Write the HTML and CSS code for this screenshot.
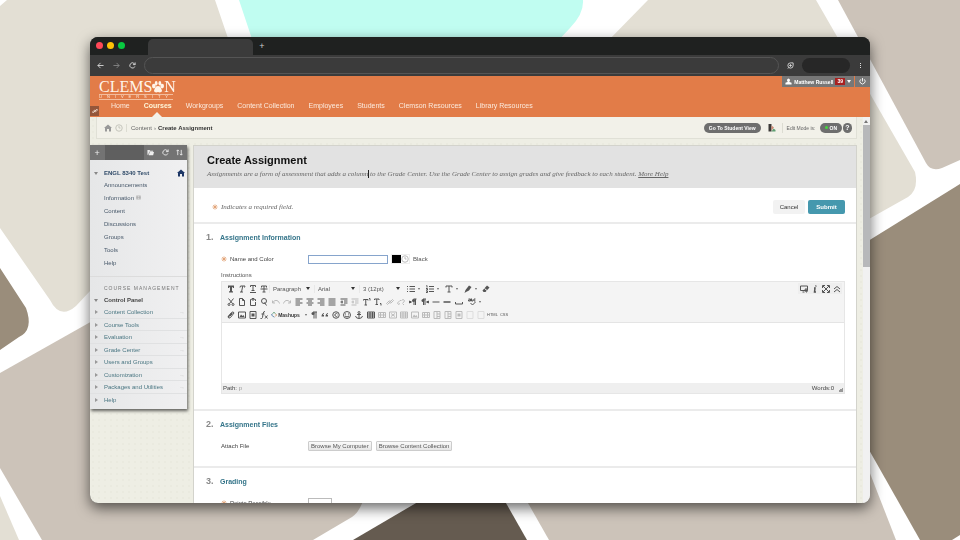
FILE: index.html
```html
<!DOCTYPE html>
<html lang="en">
<head>
    <meta charset="UTF-8">
    <meta name="viewport" content="width=device-width, initial-scale=1.0">
    <title>Create Assignment</title>
    <link rel="stylesheet" href="styles.css">
</head>
<body>
    <svg class="backdrop" viewBox="0 0 960 540" preserveAspectRatio="xMidYMid slice" aria-hidden="true">
        <path fill="#e3dfd4" d="M0 6L7 0H215L300 250L90 291L76 306Q60 320 50 300L0 228Z"/>
        <path fill="#c0fdf1" d="M239 0H583Q584 14 570 28L540 60H259Z"/>
        <path fill="#e3dfd4" d="M648 0H816L915 172Q919 190 908 197L860 224L560 90Z"/>
        <path fill="#ccc3b9" d="M838 0H960V160L942 168Q931 172 926 163Z"/>
        <path fill="#9a8d7b" d="M960 184V535L952 540H920L860 434V246Z"/>
        <path fill="#9a8d7b" d="M0 268L26 308Q34 330 19 337L0 350Z"/>
        <path fill="#ccc3b9" d="M0 373L110 311L365 495Q360 512 352 517L313 540H42L0 468Z"/>
        <path fill="#e3dfd4" d="M0 496L19 540H0Z"/>
        <path fill="#655b50" d="M353 540L440 489H498L527 540Z"/>
        <path fill="#ccc3b9" d="M549 540L520 489L850 422L896 540Z"/>
    </svg>

    <svg class="sprite" aria-hidden="true">
        <symbol id="back" viewBox="0 0 16 16"><path d="M15 8H2M8 2L2 8l6 6"/></symbol>
        <symbol id="forward" viewBox="0 0 16 16"><path d="M1 8h13M8 2l6 6-6 6"/></symbol>
        <symbol id="reload" viewBox="0 0 16 16"><path d="M13.5 10A6 6 0 1 1 12 3.5L14 6M14 1v5H9"/></symbol>
        <symbol id="leaf" viewBox="0 0 16 16"><path d="M14 2H8a6 6 0 1 0 6 6ZM8 5v6M5 8h6M2 15l3-3"/></symbol>
        <symbol id="home" viewBox="0 0 16 16"><path class="solid" d="M8 1L0 8h2v7h4v-5h4v5h4V8h2Z"/></symbol>
        <symbol id="clock" viewBox="0 0 16 16"><circle cx="8" cy="8" r="6.5"/><path d="M8 4v4h3"/></symbol>
        <symbol id="user" viewBox="0 0 16 16"><path class="solid" d="M8 1a4 4 0 0 1 2 7v1l5 2v4H1v-4l5-2V8a4 4 0 0 1 2-7Z"/></symbol>
        <symbol id="power" viewBox="0 0 16 16"><path d="M8 0v8M4 3a6 6 0 1 0 8 0"/></symbol>
        <symbol id="link" viewBox="0 0 16 16"><path d="M7 9l6-6 2 2-5 5-3 0M9 7l-6 6-2-2 5-5 3 0"/></symbol>
        <symbol id="folder" viewBox="0 0 16 16"><path class="solid" d="M1 2h5l1 2h7v2H5L3 13H1ZM6 7h10l-2 7H4Z"/></symbol>
        <symbol id="sort" viewBox="0 0 16 16"><path d="M4 14V2M1 5l3-3 3 3M12 2v12M9 11l3 3 3-3"/></symbol>
        <symbol id="asterisk" viewBox="0 0 16 16"><path d="M8 1v14M1 8h14M3 3l10 10M13 3L3 13"/></symbol>
        <symbol id="bold" viewBox="0 0 16 16"><path class="solid" d="M2 1h12v5h-2l-1-2h-1v8l2 1v2H4v-2l2-1V4H5L4 6H2Z"/></symbol>
        <symbol id="italic" viewBox="0 0 16 16"><path d="M4 5l1-3h9l-1 3M9.500 2L7 14M4 14h6"/></symbol>
        <symbol id="underline" viewBox="0 0 16 16"><path d="M3 4V1h10v3M8 1v10M5 11h6M2 15h12"/></symbol>
        <symbol id="strike" viewBox="0 0 16 16"><path d="M3 5V2h10v3M8 2v12M5 14h6M1 8h14"/></symbol>
        <symbol id="list" viewBox="0 0 16 16"><path d="M5 3h11M5 8h11M5 13h11M0 3h2M0 8h2M0 13h2"/></symbol>
        <symbol id="numlist" viewBox="0 0 16 16"><path d="M6 3h10M6 8h10M6 13h10M1 1h1v4M0 7h3v3H0M0 12h3v3H0"/></symbol>
        <symbol id="color" viewBox="0 0 16 16"><path d="M2 5V2h12v3M8 2v12M5 14h6"/></symbol>
        <symbol id="pen" viewBox="0 0 16 16"><path class="solid" d="M10 1l5 3-5 7-6 3-3 2 2-6Z"/></symbol>
        <symbol id="eraser" viewBox="0 0 16 16"><path class="solid" d="M10 1l5 4-8 9H3l-2-3Z"/><path stroke="#f4f4f4" d="M5 7l5 4"/></symbol>
        <symbol id="cut" viewBox="0 0 16 16"><path d="M3 1l8 10M13 1L5 11"/><circle cx="4" cy="13" r="2"/><circle cx="12" cy="13" r="2"/></symbol>
        <symbol id="file" viewBox="0 0 16 16"><path d="M3 1h6l4 4v10H3ZM9 1v4h4"/></symbol>
        <symbol id="paste" viewBox="0 0 16 16"><path d="M5 3H3v12h10V8M11 3h2v3M6 1h4v3H6Z"/></symbol>
        <symbol id="find" viewBox="0 0 16 16"><circle cx="8" cy="6" r="5"/><path d="M9 9l4 6"/></symbol>
        <symbol id="undo" viewBox="0 0 16 16"><path d="M1 5v5h5M1 10c3-6 11-8 14 1"/></symbol>
        <symbol id="redo" viewBox="0 0 16 16"><path d="M15 5v5h-5M15 10C12 4 4 2 1 11"/></symbol>
        <symbol id="left" viewBox="0 0 16 16"><path d="M1 2h14M1 6h9M1 10h14M1 14h9"/></symbol>
        <symbol id="center" viewBox="0 0 16 16"><path d="M1 2h14M4 6h8M1 10h14M4 14h8"/></symbol>
        <symbol id="right" viewBox="0 0 16 16"><path d="M1 2h14M6 6h9M1 10h14M6 14h9"/></symbol>
        <symbol id="justify" viewBox="0 0 16 16"><path d="M1 2h14M1 6h14M1 10h14M1 14h14"/></symbol>
        <symbol id="indent" viewBox="0 0 16 16"><path d="M1 2h14M8 6h7M8 10h7M1 14h10M1 8h5M4 5v6"/></symbol>
        <symbol id="super" viewBox="0 0 16 16"><path d="M1 5V3h9v2M5.500 3v11M3 14h5M12 1h2v4"/></symbol>
        <symbol id="sub" viewBox="0 0 16 16"><path d="M1 4V2h9v2M5.500 2v11M3 13h5M12 11h2v4"/></symbol>
        <symbol id="unlink" viewBox="0 0 16 16"><path d="M6 11l-3 2-2-3 5-5h3M10 4l3-1 2 3-4 5M12 12l2 2"/></symbol>
        <symbol id="ltr" viewBox="0 0 16 16"><path d="M15 2H9M13 2v12M10 2v12M1 6l4 2-4 2Z"/><circle class="solid" cx="9" cy="5" r="3"/></symbol>
        <symbol id="rtl" viewBox="0 0 16 16"><path d="M10 2H4M8 2v12M5 2v12M15 6l-4 2 4 2Z"/><circle class="solid" cx="4" cy="5" r="3"/></symbol>
        <symbol id="line" viewBox="0 0 16 16"><path d="M1 8h14"/></symbol>
        <symbol id="thickline" viewBox="0 0 16 16"><path stroke-width="3" d="M1 8h14"/></symbol>
        <symbol id="space" viewBox="0 0 16 16"><path d="M1 8v4h14V8"/></symbol>
        <symbol id="spell" viewBox="0 0 16 16"><path d="M1 2h4v4H1V4h4M7 1v5h3V3M15 2h-3v4h3M5 10l4 4 6-6"/></symbol>
        <symbol id="clip" viewBox="0 0 16 16"><path d="M2 11l7-8q4-3 5 1l-7 9q-4 3-5-1l8-8M5 11l6-6"/></symbol>
        <symbol id="image" viewBox="0 0 16 16"><path d="M1 2h14v12H1Z"/><path class="solid" d="M3 12l3-5 3 3 2-2 2 4Z"/></symbol>
        <symbol id="video" viewBox="0 0 16 16"><path d="M2 1h12v14H2Z"/><path class="solid" d="M5 5h6v6H5Z"/></symbol>
        <symbol id="formula" viewBox="0 0 16 16"><path d="M10 1Q7 0 6 6L5 13q-1 3-4 2M3 6h6M10 9l5 6M15 9l-5 6"/></symbol>
        <symbol id="mashup" viewBox="0 0 16 16"><path stroke="#3d8a57" d="M4 4L8 1l4 3"/><path stroke="#c77a3a" d="M12 5l3 3-4 4"/><path stroke="#3f6d9c" d="M9 14L1 8l3-3"/></symbol>
        <symbol id="pilcrow" viewBox="0 0 16 16"><path d="M14 2H6M12 2v13M8 2v13"/><circle class="solid" cx="6" cy="5" r="3"/></symbol>
        <symbol id="quote" viewBox="0 0 16 16"><path class="solid" d="M6 4Q1 5 1 11h5V8H4Q4 6 6 6ZM14 4Q9 5 9 11h5V8h-2q0-2 2-2Z"/></symbol>
        <symbol id="copyright" viewBox="0 0 16 16"><circle cx="8" cy="8" r="6.500"/><path d="M11 6a3 3 0 1 0 0 4"/></symbol>
        <symbol id="smile" viewBox="0 0 16 16"><circle cx="8" cy="8" r="7"/><path d="M5 5v2M11 5v2M4 10q4 4 8 0"/></symbol>
        <symbol id="anchor" viewBox="0 0 16 16"><circle cx="8" cy="3" r="2"/><path d="M8 5v10M4 7h8M1 10q1 5 7 5t7-5"/></symbol>
        <symbol id="table" viewBox="0 0 16 16"><path d="M1 2h14v12H1ZM1 6h14M1 10h14M6 2v12M11 2v12"/></symbol>
        <symbol id="row" viewBox="0 0 16 16"><path d="M1 3h14v10H1ZM1 8h14M5 3v10M11 3v10"/></symbol>
        <symbol id="delrow" viewBox="0 0 16 16"><path d="M1 2h14v12H1ZM4 5l8 6M12 5l-8 6"/></symbol>
        <symbol id="col" viewBox="0 0 16 16"><path d="M2 1h12v14H2ZM8 1v14M8 6h6M8 11h6"/></symbol>
        <symbol id="cell" viewBox="0 0 16 16"><path d="M2 1h12v14H2Z"/></symbol>
        <symbol id="preview" viewBox="0 0 16 16"><path d="M1 2h14v9H1ZM5 14h4M10 8h4v6h-2Z"/></symbol>
        <symbol id="info" viewBox="0 0 16 16"><path stroke-width="3" d="M10 1l-.5 2M6 6h2l-1 8h3"/></symbol>
        <symbol id="expand" viewBox="0 0 16 16"><path d="M1 6V1h5M10 1h5v5M15 10v5h-5M6 15H1v-5M2 2l12 12M14 2L2 14"/></symbol>
        <symbol id="collapse" viewBox="0 0 16 16"><path d="M2 8l6-5 6 5M2 14l6-5 6 5"/></symbol>
        <symbol id="palette" viewBox="0 0 16 16"><path fill="#3c3a38" stroke="none" d="M1 0h6v15H1Z"/><path fill="#d08a75" stroke="none" d="M7 3l5 4-5 6Z"/><path fill="#5f9e72" stroke="none" d="M7 15l4-6 4 3v3Z"/></symbol>
        <symbol id="paw" viewBox="0 0 26 26"><path class="solid" d="M13 11q5 0 7 5 3 5 0 8-3 2-7 0-4 2-7 0-3-3 0-8 2-5 7-5Z"/><ellipse class="solid" cx="4" cy="11" rx="4" ry="5"/><ellipse class="solid" cx="9" cy="5" rx="3" ry="5"/><ellipse class="solid" cx="17" cy="5" rx="3" ry="5"/><ellipse class="solid" cx="22" cy="11" rx="4" ry="5"/></symbol>
    </svg>

    <div class="window">
        <div class="tabs">
            <div class="lights"><i class="red"></i><i class="yellow"></i><i class="green"></i></div>
            <div class="tab"></div>
            <button class="new-tab" aria-label="New tab">+</button>
        </div>
        <div class="address">
            <button aria-label="Back"><svg><use href="#back"/></svg></button>
            <button class="dim" aria-label="Forward"><svg><use href="#forward"/></svg></button>
            <button aria-label="Reload"><svg><use href="#reload"/></svg></button>
            <input class="url" type="text" aria-label="Address">
            <button aria-label="Energy saver"><svg><use href="#leaf"/></svg></button>
            <button class="profile" aria-label="Profile"></button>
            <button class="more" aria-label="Menu"><i></i><i></i><i></i></button>
        </div>

        <header class="banner">
            <div class="logo">
                <div class="logo-name">CLEMS<svg><use href="#paw"/></svg>N</div>
                <div class="logo-sub">UNIVERSITY</div>
            </div>
            <nav class="main-nav">
                <a href="#">Home</a>
                <a href="#" class="active">Courses</a>
                <a href="#">Workgroups</a>
                <a href="#">Content Collection</a>
                <a href="#">Employees</a>
                <a href="#">Students</a>
                <a href="#">Clemson Resources</a>
                <a href="#">Library Resources</a>
            </nav>
            <button class="quick" aria-label="Quick links"><svg><use href="#link"/></svg></button>
            <div class="account">
                <button class="user"><svg><use href="#user"/></svg>Matthew Russell<b>39</b><i class="down"></i></button>
                <button class="logout" aria-label="Logout"><svg><use href="#power"/></svg></button>
            </div>
        </header>

        <div class="viewport">
            <div class="page">
                <div class="crumbs">
                    <div class="crumb-icons">
                        <svg><use href="#home"/></svg>
                        <svg class="faint"><use href="#clock"/></svg>
                    </div>
                    <a href="#">Content</a>
                    <span class="sep">›</span>
                    <strong>Create Assignment</strong>
                    <button class="pill">Go To Student View</button>
                    <svg class="theme"><use href="#palette"/></svg>
                    <div class="edit-mode">
                        <span>Edit Mode is:</span>
                        <button class="pill"><i class="led"></i>ON</button>
                        <button class="pill help">?</button>
                    </div>
                </div>

                <div class="columns">
                    <aside class="sidebar">
                        <div class="side-tools">
                            <button aria-label="Add">+</button>
                            <div class="side-gap"></div>
                            <button aria-label="Folder view"><svg><use href="#folder"/></svg></button>
                            <button aria-label="Refresh"><svg><use href="#reload"/></svg></button>
                            <button aria-label="Reorder"><svg><use href="#sort"/></svg></button>
                        </div>
                        <div class="side-title course"><i class="down"></i>ENGL 8340 Test<svg><use href="#home"/></svg></div>
                        <ul class="course-links">
                            <li><a href="#">Announcements</a></li>
                            <li><a href="#">Information</a> <svg><use href="#row"/></svg></li>
                            <li><a href="#">Content</a></li>
                            <li><a href="#">Discussions</a></li>
                            <li><a href="#">Groups</a></li>
                            <li><a href="#">Tools</a></li>
                            <li><a href="#">Help</a></li>
                        </ul>
                        <div class="side-label">COURSE MANAGEMENT</div>
                        <div class="side-title"><i class="down"></i>Control Panel</div>
                        <ul class="panel-links">
                            <li><a href="#">Content Collection</a><span>→</span></li>
                            <li><a href="#">Course Tools</a></li>
                            <li><a href="#">Evaluation</a><span>→</span></li>
                            <li><a href="#">Grade Center</a><span>→</span></li>
                            <li><a href="#">Users and Groups</a></li>
                            <li><a href="#">Customization</a><span>→</span></li>
                            <li><a href="#">Packages and Utilities</a><span>→</span></li>
                            <li><a href="#">Help</a></li>
                        </ul>
                    </aside>

                    <main class="content">
                        <div class="title">
                            <h1>Create Assignment</h1>
                            <p>Assignments are a form of assessment that adds a column<span class="caret"></span> to the Grade Center. Use the Grade Center to assign grades and give feedback to each student. <a href="#">More Help</a></p>
                        </div>

                        <form>
                            <div class="actions">
                                <svg class="star"><use href="#asterisk"/></svg>
                                <em>Indicates a required field.</em>
                                <button type="button" class="cancel">Cancel</button>
                                <button type="button" class="submit">Submit</button>
                            </div>

                            <section>
                                <h2><span>1.</span>Assignment Information</h2>
                                <div class="field">
                                    <label for="name"><svg class="star"><use href="#asterisk"/></svg>Name and Color</label>
                                    <input id="name" class="name" type="text">
                                    <button type="button" class="swatch" aria-label="Pick color"><i></i><svg><use href="#clock"/></svg></button>
                                    <span>Black</span>
                                </div>
                                <label class="block" for="instructions">Instructions</label>
                                <div class="editor">
                                    <div class="toolbar">
                                        <div class="row">
                                            <button type="button" aria-label="Bold"><svg><use href="#bold"/></svg></button>
                                            <button type="button" aria-label="Italic"><svg><use href="#italic"/></svg></button>
                                            <button type="button" aria-label="Underline"><svg><use href="#underline"/></svg></button>
                                            <button type="button" aria-label="Strikethrough"><svg><use href="#strike"/></svg></button>
                                            <span class="pick"><select aria-label="Format"><option>Paragraph</option></select></span>
                                            <span class="pick"><select aria-label="Font"><option>Arial</option></select></span>
                                            <span class="pick"><select aria-label="Size"><option>3 (12pt)</option></select></span>
                                            <button type="button" class="menu" aria-label="Bullets"><svg><use href="#list"/></svg></button>
                                            <button type="button" class="menu" aria-label="Numbering"><svg><use href="#numlist"/></svg></button>
                                            <button type="button" class="menu" aria-label="Text color"><svg><use href="#color"/></svg></button>
                                            <button type="button" class="menu" aria-label="Highlight"><svg><use href="#pen"/></svg></button>
                                            <button type="button" aria-label="Remove formatting"><svg><use href="#eraser"/></svg></button>
                                            <div class="view">
                                                <button type="button" aria-label="Preview"><svg><use href="#preview"/></svg></button>
                                                <button type="button" aria-label="Help"><svg><use href="#info"/></svg></button>
                                                <button type="button" aria-label="Full screen"><svg><use href="#expand"/></svg></button>
                                                <button type="button" aria-label="Show less"><svg><use href="#collapse"/></svg></button>
                                            </div>
                                        </div>
                                        <div class="row">
                                            <button type="button" aria-label="Cut"><svg><use href="#cut"/></svg></button>
                                            <button type="button" aria-label="Copy"><svg><use href="#file"/></svg></button>
                                            <button type="button" aria-label="Paste"><svg><use href="#paste"/></svg></button>
                                            <button type="button" aria-label="Find"><svg><use href="#find"/></svg></button>
                                            <button type="button" class="off start" aria-label="Undo"><svg><use href="#undo"/></svg></button>
                                            <button type="button" class="off" aria-label="Redo"><svg><use href="#redo"/></svg></button>
                                            <button type="button" class="start" aria-label="Align left"><svg><use href="#left"/></svg></button>
                                            <button type="button" aria-label="Center"><svg><use href="#center"/></svg></button>
                                            <button type="button" aria-label="Align right"><svg><use href="#right"/></svg></button>
                                            <button type="button" aria-label="Justify"><svg><use href="#justify"/></svg></button>
                                            <button type="button" class="start" aria-label="Indent"><svg><use href="#indent"/></svg></button>
                                            <button type="button" class="off" aria-label="Outdent"><svg><use href="#indent"/></svg></button>
                                            <button type="button" class="start" aria-label="Superscript"><svg><use href="#super"/></svg></button>
                                            <button type="button" aria-label="Subscript"><svg><use href="#sub"/></svg></button>
                                            <button type="button" class="off start" aria-label="Link"><svg><use href="#link"/></svg></button>
                                            <button type="button" class="off" aria-label="Unlink"><svg><use href="#unlink"/></svg></button>
                                            <button type="button" class="start" aria-label="Left to right"><svg><use href="#ltr"/></svg></button>
                                            <button type="button" class="start" aria-label="Right to left"><svg><use href="#rtl"/></svg></button>
                                            <button type="button" aria-label="Line"><svg><use href="#line"/></svg></button>
                                            <button type="button" aria-label="Rule"><svg><use href="#thickline"/></svg></button>
                                            <button type="button" class="start" aria-label="Space"><svg><use href="#space"/></svg></button>
                                            <button type="button" class="menu start" aria-label="Spelling"><svg><use href="#spell"/></svg></button>
                                        </div>
                                        <div class="row">
                                            <button type="button" aria-label="Attach"><svg><use href="#clip"/></svg></button>
                                            <button type="button" aria-label="Image"><svg><use href="#image"/></svg></button>
                                            <button type="button" aria-label="Media"><svg><use href="#video"/></svg></button>
                                            <button type="button" aria-label="Formula"><svg><use href="#formula"/></svg></button>
                                            <button type="button" class="menu mashups start"><svg><use href="#mashup"/></svg>Mashups</button>
                                            <button type="button" aria-label="Paragraph marks"><svg><use href="#pilcrow"/></svg></button>
                                            <button type="button" aria-label="Quote"><svg><use href="#quote"/></svg></button>
                                            <button type="button" aria-label="Symbol"><svg><use href="#copyright"/></svg></button>
                                            <button type="button" aria-label="Emoticon"><svg><use href="#smile"/></svg></button>
                                            <button type="button" class="start" aria-label="Anchor"><svg><use href="#anchor"/></svg></button>
                                            <button type="button" class="start" aria-label="Table"><svg><use href="#table"/></svg></button>
                                            <button type="button" class="off" aria-label="Row"><svg><use href="#row"/></svg></button>
                                            <button type="button" class="off" aria-label="Delete row"><svg><use href="#delrow"/></svg></button>
                                            <button type="button" class="off" aria-label="Row before"><svg><use href="#table"/></svg></button>
                                            <button type="button" class="off" aria-label="Row after"><svg><use href="#image"/></svg></button>
                                            <button type="button" class="off" aria-label="Merge"><svg><use href="#row"/></svg></button>
                                            <button type="button" class="off" aria-label="Column before"><svg><use href="#col"/></svg></button>
                                            <button type="button" class="off" aria-label="Column after"><svg><use href="#col"/></svg></button>
                                            <button type="button" class="off" aria-label="Delete column"><svg><use href="#video"/></svg></button>
                                            <button type="button" class="off pale" aria-label="Cell"><svg><use href="#cell"/></svg></button>
                                            <button type="button" class="off pale" aria-label="Split cell"><svg><use href="#cell"/></svg></button>
                                            <button type="button" class="code">HTML</button>
                                            <button type="button" class="code">CSS</button>
                                        </div>
                                    </div>
                                    <textarea id="instructions"></textarea>
                                    <div class="status"><span>Path: <i>p</i></span><span>Words:0</span></div>
                                </div>
                            </section>

                            <section>
                                <h2><span>2.</span>Assignment Files</h2>
                                <div class="field">
                                    <label for="browse">Attach File</label>
                                    <button type="button" id="browse" class="browse">Browse My Computer</button>
                                    <button type="button" class="browse">Browse Content Collection</button>
                                </div>
                            </section>

                            <section>
                                <h2><span>3.</span>Grading</h2>
                                <div class="field">
                                    <label for="points"><svg class="star"><use href="#asterisk"/></svg>Points Possible</label>
                                    <input id="points" class="points" type="text">
                                </div>
                            </section>
                        </form>
                    </main>
                </div>
            </div>
            <div class="scrollbar"><i class="up"></i><div class="thumb"></div></div>
        </div>
    </div>
</body>
</html>
```
FILE: styles.css
```css
* {
    box-sizing: border-box;
}
body {
    margin: 0;
    padding: 37px 90px;
    height: 100vh;
    background: #fff;
    font-family: "Liberation Sans", Arial, sans-serif;
    font-size: 6px;
    line-height: 8px;
    color: #555;
    overflow: hidden;
}
a {
    color: inherit;
    text-decoration: none;
}
button, input, select, textarea {
    font: inherit;
    color: inherit;
    margin: 0;
    padding: 0;
    border: none;
    background: none;
}
button {
    display: flex;
    align-items: center;
    justify-content: center;
    cursor: pointer;
}
ul {
    list-style: none;
    margin: 0;
    padding: 0;
}
svg {
    flex: none;
    width: 8px;
    height: 8px;
    fill: none;
    stroke: currentColor;
    stroke-width: 2;
}
.solid {
    fill: currentColor;
    stroke: none;
}
.sprite {
    display: none;
}
.backdrop {
    position: fixed;
    inset: 0;
    width: 100%;
    height: 100%;
    stroke: none;
}
.down {
    border: 2px solid transparent;
    border-top: 3px solid currentColor;
    border-bottom: none;
}

/* browser window */
.window {
    position: relative;
    display: flex;
    flex-direction: column;
    height: 100%;
    border-radius: 8px;
    overflow: hidden;
    background: #3b3b3b;
    box-shadow: 0 5px 14px rgba(0, 0, 0, 0.6);
}
.tabs {
    display: flex;
    align-items: flex-end;
    height: 18px;
    background: #1f2120;
    color: #ccc;
}
.lights {
    display: flex;
    gap: 4px;
    width: 58px;
    padding: 0 6px 6px;
}
.lights i {
    width: 7px;
    height: 7px;
    border-radius: 50%;
}
.red { background: #ff4757; }
.yellow { background: #ffc107; }
.green { background: #08c940; }
.tab {
    width: 105px;
    height: 16px;
    border-radius: 5px 5px 0 0;
    background: #3b3b3b;
}
.new-tab {
    width: 18px;
    height: 18px;
    font-size: 9px;
}
.address {
    display: flex;
    align-items: center;
    gap: 8px;
    height: 21px;
    padding: 0 8px 0 7px;
    color: #ddd;
}
.address svg {
    width: 7px;
    height: 7px;
}
.address .dim {
    color: #888;
    padding: 0 1px;
}
.url {
    flex: 1;
    min-width: 0;
    height: 17px;
    border: 1px solid #555;
    border-radius: 9px;
    padding: 0 8px;
}
.profile {
    width: 48px;
    height: 15px;
    border-radius: 8px;
    background: #272727;
}
.more {
    flex-direction: column;
    gap: 1px;
    width: 4px;
}
.more i {
    width: 1px;
    height: 1px;
    background: #ddd;
}

/* orange banner */
.banner {
    position: relative;
    flex: none;
    height: 41px;
    background: #e27c48;
    color: #fbeadd;
}
.logo {
    width: 74px;
    margin-left: 9px;
    padding-top: 3px;
}
.logo-name {
    display: flex;
    align-items: center;
    border-bottom: 1px solid #f3bd9d;
    font: 16px/15px "Liberation Serif", serif;
    color: #fff5ea;
}
.logo-name svg {
    width: 12px;
    height: 12px;
}
.logo-sub {
    border-bottom: 1px solid #f3bd9d;
    font-size: 4px;
    line-height: 4px;
    letter-spacing: 5px;
    white-space: nowrap;
    overflow: hidden;
}
.main-nav {
    display: flex;
    gap: 14px;
    padding: 1px 0 0 21px;
    font-size: 7px;
    line-height: 10px;
    white-space: nowrap;
}
.main-nav a {
    position: relative;
}
.active {
    font-weight: bold;
    color: #fff6d8;
}
.active::after {
    content: "";
    position: absolute;
    left: 7px;
    top: 11px;
    border: 6px solid transparent;
    border-top: none;
    border-bottom: 6px solid #f3f2ea;
}
.quick {
    position: absolute;
    left: 0;
    bottom: 1px;
    width: 9px;
    height: 10px;
    background: #94563a;
}
.quick svg {
    width: 6px;
    height: 6px;
}
.account {
    position: absolute;
    top: 0;
    right: 0;
    display: flex;
    gap: 1px;
    font-size: 5px;
    font-weight: bold;
    color: #fff;
}
.account button {
    height: 11px;
    background: #777;
}
.account svg {
    width: 7px;
    height: 7px;
}
.user {
    gap: 2px;
    padding: 0 3px;
}
.user b {
    padding: 0 2px;
    background: #a8201f;
    line-height: 7px;
}
.logout {
    width: 15px;
}

/* page */
.viewport {
    flex: 1;
    min-height: 0;
    display: flex;
    overflow: hidden;
    background: #eeeee4;
}
.page {
    flex: 1;
    min-width: 0;
    padding-right: 6px;
    background-image: radial-gradient(#eaeadf 1px, transparent 1px);
    background-size: 6px 6px;
}
.crumbs {
    display: flex;
    align-items: center;
    height: 22px;
    margin-left: 6px;
    padding-right: 4px;
    border: 1px solid #e0e0d6;
    border-top: none;
    background: #f2f1e9;
    color: #666;
}
.crumb-icons {
    display: flex;
    gap: 3px;
    padding: 0 3px 0 7px;
    margin-right: 4px;
    border-right: 1px solid #dcdcd2;
    color: #999;
}
.faint {
    color: #c5c5bc;
}
.sep {
    padding: 0 2px;
}
.crumbs strong {
    flex: 1;
    color: #333;
}
.pill {
    height: 10px;
    padding: 0 5px;
    border-radius: 5px;
    background: #6e6e6e;
    font-size: 5px;
    font-weight: bold;
    color: #fff;
}
.theme {
    margin: 0 6px 0 7px;
}
.edit-mode {
    display: flex;
    align-items: center;
    gap: 1px;
    padding-left: 4px;
    border-left: 1px solid #dcdcd2;
    font-size: 5px;
}
.edit-mode span {
    margin-right: 3px;
}
.led {
    width: 3px;
    height: 3px;
    margin-right: 2px;
    border-radius: 50%;
    background: #45d63c;
}
.help {
    width: 9px;
    padding: 0;
    font-size: 7px;
}
.columns {
    display: flex;
    align-items: flex-start;
    gap: 6px;
    padding-top: 6px;
}
.scrollbar {
    width: 7px;
    padding-top: 3px;
    background: #f1f1f1;
}
.up {
    display: block;
    width: 4px;
    margin: 0 1px 2px;
    border: 2px solid transparent;
    border-top: none;
    border-bottom: 3px solid #777;
}
.thumb {
    height: 37%;
    background: #b7b8ba;
}

/* left menu */
.sidebar {
    flex: none;
    width: 97px;
    padding-bottom: 3px;
    background: linear-gradient(to right, #e6e7e8, #f0f0f1);
    box-shadow: 1px 2px 3px rgba(0, 0, 0, 0.6);
    color: #47586a;
}
.side-tools {
    display: flex;
    height: 15px;
    background: #737373;
    color: #eee;
}
.side-tools button {
    flex: 1;
    font-size: 9px;
}
.side-tools svg {
    width: 7px;
    height: 7px;
}
.side-gap {
    width: 39px;
    background: #5f5f5f;
}
.side-title {
    display: flex;
    align-items: center;
    height: 12px;
    padding: 0 2px 0 4px;
    font-weight: bold;
    color: #444;
}
.side-title .down {
    margin-right: 6px;
    color: #888;
}
.course {
    margin-top: 7px;
    color: #2f4a68;
}
.course svg {
    margin-left: auto;
    color: #1d3766;
}
.course-links {
    padding-bottom: 6px;
    border-bottom: 1px solid #dcdcdc;
}
.course-links li {
    padding-left: 14px;
    line-height: 13px;
}
.course-links svg {
    width: 5px;
    height: 5px;
    color: #aaa;
}
.side-label {
    padding: 7px 0 2px 14px;
    font-size: 5px;
    letter-spacing: 1px;
    white-space: nowrap;
    color: #777;
}
.panel-links li {
    display: flex;
    align-items: center;
    height: 12px;
    padding-right: 2px;
    border-bottom: 1px solid #e0e1e2;
    color: #4b7783;
}
.panel-links li:nth-child(odd) {
    height: 13px;
}
.panel-links li:last-child {
    border: none;
}
.panel-links li::before {
    content: "";
    margin: 0 6px 0 5px;
    border: 2px solid transparent;
    border-left: 3px solid #999;
    border-right: none;
}
.panel-links span {
    margin-left: auto;
    color: #ccc;
}

/* assignment form */
.content {
    flex: 1;
    min-width: 0;
    border: 1px solid #d3d3cc;
    background: #fff;
}
.title {
    height: 42px;
    padding: 8px 13px;
    background: #e2e2e2;
}
h1 {
    margin: 0 0 4px;
    font-size: 11px;
    line-height: 12px;
    color: #111;
}
.title p, .actions em {
    margin: 0;
    font: italic 7px/8px "Liberation Serif", serif;
    color: #666;
}
.title a {
    text-decoration: underline;
}
.caret {
    position: relative;
}
.caret::after {
    content: "";
    position: absolute;
    top: 0;
    width: 1px;
    height: 8px;
    background: #222;
}
.actions {
    display: flex;
    align-items: center;
    gap: 3px;
    height: 36px;
    padding: 3px 11px 0 18px;
    border-bottom: 2px solid #ebebeb;
}
.star {
    width: 6px;
    height: 6px;
    color: #df9a68;
}
.actions em {
    flex: 1;
}
.cancel, .submit {
    height: 14px;
    border-radius: 2px;
    background: #f2f2f2;
    color: #333;
    width: 32px;
}
.submit {
    width: 37px;
    background: #4598ae;
    color: #fff;
    font-weight: bold;
}
section {
    padding: 7px 11px 15px 12px;
    border-bottom: 2px solid #ebebeb;
}
h2 {
    display: flex;
    align-items: baseline;
    margin: 0;
    font-size: 7px;
    line-height: 12px;
    color: #35758a;
}
h2 span {
    width: 14px;
    font-size: 9px;
    color: #888;
}
.field {
    display: flex;
    align-items: center;
    gap: 3px;
    margin-top: 10px;
    padding-left: 15px;
}
.field label {
    display: flex;
    align-items: center;
    gap: 3px;
    width: 84px;
    color: #444;
}
.name {
    width: 80px;
    height: 9px;
    border: 1px solid #86a4cc;
}
.swatch {
    padding: 0;
    border: 1px solid #eee;
    color: #bbb;
}
.swatch i {
    width: 9px;
    height: 8px;
    background: #000;
}
.block {
    display: block;
    margin: 7px 0 2px 15px;
}
.editor {
    margin-left: 15px;
    border: 1px solid #e6e6e6;
}
.toolbar {
    padding: 0 2px 1px;
    border-bottom: 1px solid #e4e4e4;
    background: #f4f4f4;
    color: #555;
}
.row {
    display: flex;
    align-items: center;
    height: 13px;
    padding-left: 1px;
}
.row button {
    width: 11px;
    height: 11px;
    flex: none;
}
.row .start {
    margin-left: 1px;
}
.row .off {
    color: #bbb;
}
.row .pale {
    color: #ddd;
}
.row .menu {
    width: 19px;
    gap: 3px;
}
.menu::after {
    content: "";
    border: 1px solid transparent;
    border-top: 2px solid #666;
    border-bottom: none;
}
.row .mashups {
    width: 38px;
    gap: 1px;
    font-size: 5px;
    font-weight: bold;
    color: #333;
}
.mashups svg {
    width: 6px;
    height: 6px;
}
.mashups::after {
    margin-left: 4px;
}
.row .code {
    width: auto;
    padding: 0 1px;
    font-size: 4px;
}
.pick {
    display: flex;
    align-items: center;
    width: 45px;
    padding: 0 4px 0 3px;
    border-left: 1px solid #e8e8e8;
}
.pick select {
    appearance: none;
    flex: 1;
    min-width: 0;
}
.pick::after {
    content: "";
    border: 2px solid transparent;
    border-top: 3px solid #333;
    border-bottom: none;
}
.view {
    display: flex;
    margin-left: auto;
    background: #eee;
}
textarea {
    display: block;
    width: 100%;
    height: 60px;
    resize: none;
    background: #fff;
}
.status {
    display: flex;
    justify-content: space-between;
    padding: 1px 10px 1px 1px;
    background: linear-gradient(135deg, transparent 50%, #999 50%) right 1px bottom 1px / 5px 5px no-repeat, #efefef;
    color: #444;
}
.status i {
    font-style: normal;
    color: #999;
}
.browse {
    height: 10px;
    margin-right: 1px;
    padding: 0 2px;
    border: 1px solid #ccc;
    border-radius: 1px;
    background: linear-gradient(#fafafa, #e6e6e6);
}
.points {
    width: 24px;
    height: 9px;
    border: 1px solid #bbb;
}
```
